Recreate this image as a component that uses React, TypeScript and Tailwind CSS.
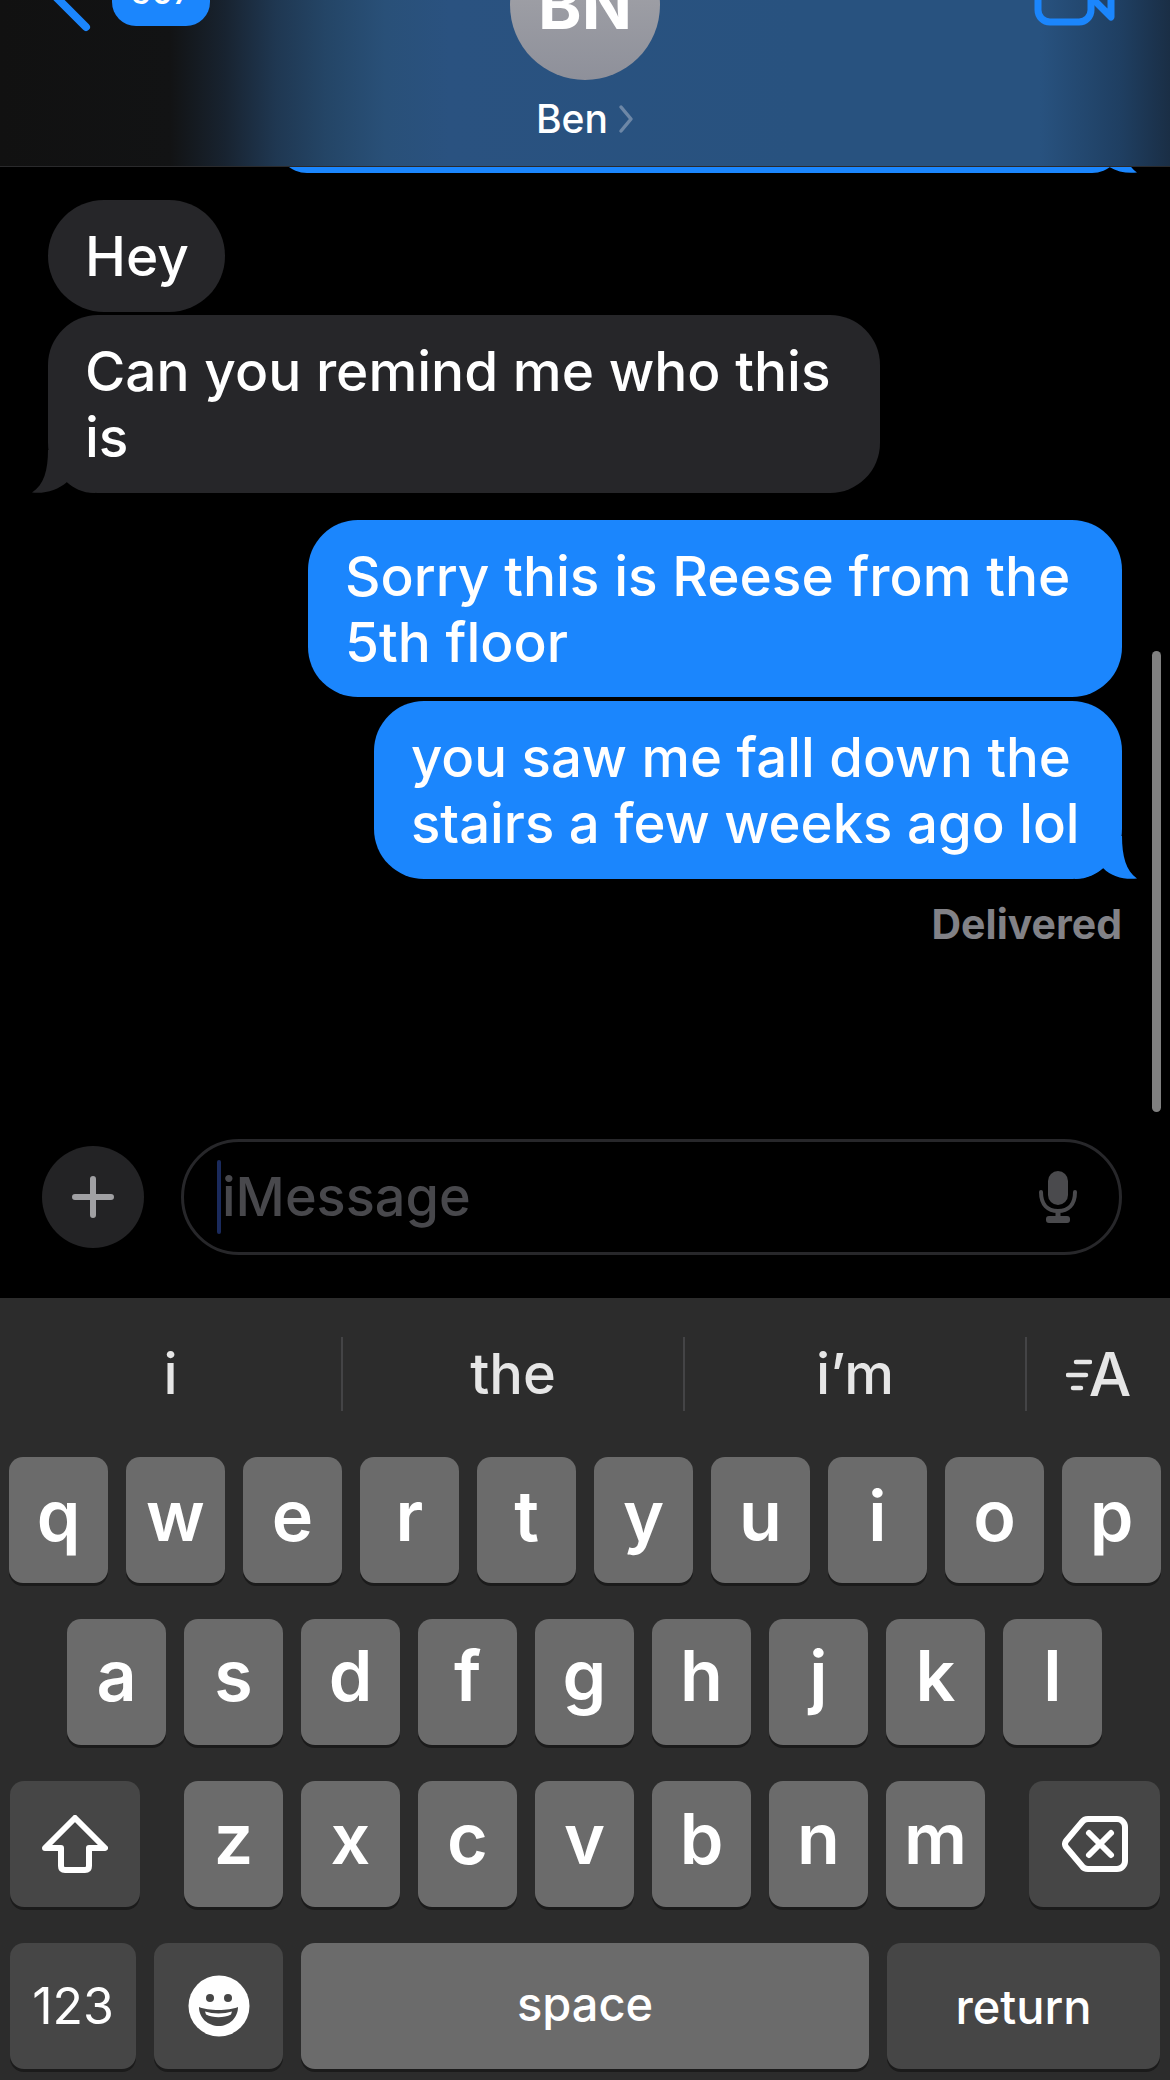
import React from "react";

const font = { fontFamily: '"Inter", "Liberation Sans", sans-serif' };

function TailRight({ color }: { color: string }) {
  return (
    <svg className="absolute right-[-15px] bottom-0" width="62" height="43" viewBox="0 0 62 43">
      <path d="M47 0 C47 20 51 35 62 42.5 C50 44 37 41 28 32 C22 38 12 43 0 43 L0 0 Z" fill={color} />
    </svg>
  );
}

function TailLeft({ color }: { color: string }) {
  return (
    <svg className="absolute left-[-16px] bottom-0" width="63" height="43" viewBox="0 0 63 43">
      <path d="M16 0 C16 20 12 35 0 42.5 C13 44 26 40 35 32 C41 38 50 43 63 43 L63 0 Z" fill={color} />
    </svg>
  );
}

function Key({ label, pb }: { label: string; pb: string }) {
  return (
    <div className={`w-[99px] h-[126px] shrink-0 rounded-[14px] bg-[#6b6b6b] shadow-[0_3px_0_#1b1b1b] flex items-center justify-center text-white text-[70px] font-semibold leading-none ${pb}`}>
      {label}
    </div>
  );
}

function Row({ keys, pb }: { keys: string; pb: string }) {
  return (
    <>
      {keys.split("").map((k) => (
        <Key key={k} label={k} pb={pb} />
      ))}
    </>
  );
}

function DarkKey({ w, children }: { w: string; children: React.ReactNode }) {
  return (
    <div className={`${w} h-[126px] shrink-0 rounded-[14px] bg-[#464646] shadow-[0_3px_0_#1b1b1b] flex items-center justify-center text-white`}>
      {children}
    </div>
  );
}

export default function App() {
  return (
    <div className="w-[1170px] h-[2080px] overflow-hidden bg-black flex flex-col relative" style={font}>
      {/* Header */}
      <div className="h-[167px] shrink-0 overflow-hidden border-b border-[#2a2a2c] bg-[linear-gradient(90deg,#111111_0px,#121314_170px,#182330_225px,#1f3751_275px,#244566_325px,#295078_385px,#2a5280_450px,#28527f_800px,#28527f_1040px,#1f3f62_1120px,#1a2e45_1170px)] grid grid-cols-[1fr_auto_1fr]">
        <div className="flex items-start">
          <svg className="ml-[48px] mt-[-30px] shrink-0" width="44" height="62" viewBox="0 0 44 62">
            <path d="M38 57 L4 23" fill="none" stroke="#1b86fd" strokeWidth="8" strokeLinecap="round" strokeLinejoin="round" />
          </svg>
          <div className="ml-[20px] mt-[-34px] w-[98px] h-[60px] rounded-[24px] bg-[#1b86fd] text-white text-[34px] font-medium leading-[46px] text-center pt-[3px]">507</div>
        </div>
        <div className="flex flex-col items-center">
          <div className="w-[150px] h-[150px] mt-[-70px] rounded-full bg-[linear-gradient(180deg,#a9a9ad,#8e909a)] flex items-center justify-center text-white text-[66px] font-bold leading-none">BN</div>
          <div className="mt-[17px] flex items-center gap-[10px] text-white text-[39px] font-medium leading-[44px]">
            <span>Ben</span>
            <svg width="16" height="30" viewBox="0 0 16 30">
              <path d="M3 3 L13 15 L3 27" fill="none" stroke="#6d87a6" strokeWidth="3.5" strokeLinecap="round" strokeLinejoin="round" />
            </svg>
          </div>
        </div>
        <div className="flex justify-end items-start">
          <svg className="mr-[52px] mt-[-30px]" width="84" height="56" viewBox="0 0 84 56">
            <rect x="4" y="4" width="53" height="48" rx="12" fill="none" stroke="#1b86fd" strokeWidth="7" />
            <path d="M60 30 L77 47 L77 0" fill="none" stroke="#1b86fd" strokeWidth="7" strokeLinejoin="round" strokeLinecap="round" />
          </svg>
        </div>
      </div>

      {/* Messages */}
      <div className="flex-1 flex flex-col text-white text-[55px] font-medium leading-[66px]">
        <div className="h-[6px] shrink-0 overflow-hidden flex justify-end pr-[48px]">
          <div className="relative w-[845px] h-[60px] mt-[-54px] shrink-0 rounded-[50px] bg-[#1b86fd]">
            <TailRight color="#1b86fd" />
          </div>
        </div>
        <div className="mt-[27px] ml-[48px] w-[177px] h-[112px] rounded-[56px] bg-[#262629] px-[37px] py-[23px] whitespace-nowrap">Hey</div>
        <div className="relative mt-[3px] ml-[48px] w-[832px] h-[178px] rounded-[50px] bg-[#262629] px-[37px] py-[23px] whitespace-nowrap">
          <TailLeft color="#262629" />
          <span className="relative">Can you remind me who this<br />is</span>
        </div>
        <div className="mt-[27px] self-end mr-[48px] w-[814px] h-[177px] rounded-[50px] bg-[#1b86fd] px-[37px] py-[23px] whitespace-nowrap">
          Sorry this is Reese from the<br />5th floor
        </div>
        <div className="relative mt-[4px] self-end mr-[48px] w-[748px] h-[178px] rounded-[50px] bg-[#1b86fd] px-[37px] py-[23px] whitespace-nowrap">
          <TailRight color="#1b86fd" />
          <span className="relative text-[54.5px]">you saw me fall down the<br />stairs a few weeks ago lol</span>
        </div>
        <div className="mt-[23px] self-end mr-[48px] text-[41px] leading-[44px] font-bold text-[#828287]">Delivered</div>

        <div className="mt-auto mb-[43px] flex items-center pl-[42px] pr-[48px]">
          <div className="w-[102px] h-[102px] rounded-full bg-[#232325] flex items-center justify-center">
            <svg width="42" height="42" viewBox="0 0 42 42">
              <path d="M21 3 V39 M3 21 H39" stroke="#a0a0a3" strokeWidth="6" strokeLinecap="round" />
            </svg>
          </div>
          <div className="ml-[37px] flex-1 h-[116px] rounded-[58px] border-[3px] border-[#27272a] flex items-center pl-[33px] pr-[42px] text-[#48484c] text-[54px] font-medium">
            <div className="w-[4px] h-[74px] rounded-full bg-[#1a2a5c]" />
            <span className="ml-[1px]">iMessage</span>
            <svg className="ml-auto" width="38" height="52" viewBox="0 0 38 52">
              <rect x="9" y="0" width="20" height="34" rx="10" fill="#4a4a4d" />
              <path d="M2 21 C2 34 9 40 19 40 C29 40 36 34 36 21" fill="none" stroke="#4a4a4d" strokeWidth="4" strokeLinecap="round" />
              <path d="M19 40 V46" stroke="#4a4a4d" strokeWidth="5" />
              <rect x="7" y="45" width="24" height="7" rx="3" fill="#4a4a4d" />
            </svg>
          </div>
        </div>
      </div>

      {/* Keyboard */}
      <div className="h-[782px] shrink-0 bg-[#2c2c2c] flex flex-col">
        <div className="h-[159px] pt-[39px] flex items-start text-[#e6e6e6] text-[56px] font-medium leading-[74px]">
          <div className="w-[341px] h-[74px] flex items-center justify-center">i</div>
          <div className="w-[342px] h-[74px] border-l-2 border-[#444446] flex items-center justify-center">the</div>
          <div className="w-[342px] h-[74px] border-l-2 border-[#444446] flex items-center justify-center">i’m</div>
          <div className="flex-1 h-[74px] border-l-2 border-[#444446] flex items-center justify-center">
            <svg width="26" height="34" viewBox="0 0 26 34" className="mt-[2px] mr-[-3px]">
              <path d="M10 4 H24 M2 17 H20 M7 30 H15" stroke="#e6e6e6" strokeWidth="4.5" strokeLinecap="round" />
            </svg>
            <span className="text-[60px] font-medium">A</span>
          </div>
        </div>
        <div className="flex flex-col gap-[36px] px-[9px]">
          <div className="flex justify-center gap-[18px]"><Row keys="qwertyuiop" pb="pb-[8px]" /></div>
          <div className="flex justify-center gap-[18px] pr-[1px]"><Row keys="asdfghjkl" pb="pb-[12px]" /></div>
          <div className="flex justify-between px-[1px]">
            <DarkKey w="w-[130px]">
              <svg width="66" height="58" viewBox="0 0 66 58">
                <path d="M33 3 L63 33 H47 V51 Q47 55 43 55 H23 Q19 55 19 51 V33 H3 Z" fill="none" stroke="#fff" strokeWidth="6" strokeLinejoin="round" />
              </svg>
            </DarkKey>
            <div className="flex gap-[18px]"><Row keys="zxcvbnm" pb="pb-[10px]" /></div>
            <DarkKey w="w-[131px]">
              <svg width="66" height="56" viewBox="0 0 66 56">
                <path d="M26 3 H55 A8 8 0 0 1 63 11 V45 A8 8 0 0 1 55 53 H26 Q22 53 20 50 L4 31 Q2 28 4 25 L20 6 Q22 3 26 3 Z" fill="none" stroke="#fff" strokeWidth="6" strokeLinejoin="round" />
                <path d="M27 17 L49 39 M49 17 L27 39" stroke="#fff" strokeWidth="6" strokeLinecap="round" />
              </svg>
            </DarkKey>
          </div>
          <div className="flex justify-between px-[1px]">
            <div className="flex gap-[18px]">
              <DarkKey w="w-[126px]"><span className="text-[50px] leading-none">123</span></DarkKey>
              <DarkKey w="w-[129px]">
                <svg width="62" height="62" viewBox="0 0 62 62">
                  <circle cx="31" cy="31" r="30.5" fill="#fff" />
                  <circle cx="22" cy="23" r="4" fill="#464646" />
                  <circle cx="40" cy="23" r="4" fill="#464646" />
                  <path d="M11 32 C20 36 41 36 50 32 C50 43 41 51 31 51 C20 51 11 43 11 32 Z" fill="#464646" />
                  <path d="M17 36.5 C25 39 36 39 44 36.5 L43 39.5 C36 43 25 43 18 39.5 Z" fill="#fff" />
                </svg>
              </DarkKey>
              <div className="w-[568px] h-[126px] rounded-[14px] bg-[#6b6b6b] shadow-[0_3px_0_#1b1b1b] flex items-center justify-center text-white text-[47px] font-medium leading-none pb-[6px]">space</div>
            </div>
            <DarkKey w="w-[273px]"><span className="text-[47px] font-medium leading-none">return</span></DarkKey>
          </div>
        </div>
      </div>

      {/* Scrollbar overlay */}
      <div className="absolute left-[1152px] top-[651px] w-[9px] h-[461px] rounded-full bg-[#808080]" />
    </div>
  );
}
